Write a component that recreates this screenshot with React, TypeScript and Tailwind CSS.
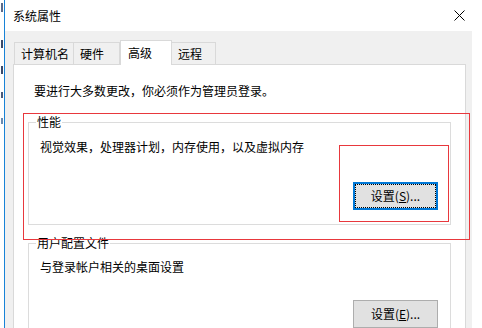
import React from 'react';

const font = "font-['Noto_Sans_CJK_SC','Microsoft_YaHei',sans-serif]";

const Tab: React.FC<{ label: string; w: string; active?: boolean; first?: boolean }> = ({ label, w, active, first }) =>
  active ? (
    <div className={`relative z-10 -mb-px flex h-[25px] items-start border border-b-0 border-[#d9d9d9] bg-white pl-[7px] pt-[3px] ${w}`}>
      {label}
    </div>
  ) : (
    <div
      className={`flex h-[22px] items-center border-t border-r border-[#d9d9d9] bg-[#f0f0f0] pl-[6px] pt-px ${first ? 'ml-px border-l' : ''} ${w}`}
    >
      {label}
    </div>
  );

const Button: React.FC<{ children: React.ReactNode; focused?: boolean }> = ({ children, focused }) => (
  <div
    className={`flex h-[28px] w-[85px] items-center justify-center bg-[#e1e1e1] ${
      focused
        ? 'border-2 border-[#0078d7] outline outline-1 outline-dotted outline-black outline-offset-[-3px]'
        : 'border border-[#adadad]'
    }`}
  >
    {children}
  </div>
);

const GroupBox: React.FC<{ title: string; text: string; className: string; button: React.ReactNode; pt: string }> = ({
  title, text, className, button, pt,
}) => (
  <div className={`relative flex flex-col border border-[#dcdcdc] pl-[11px] pr-[12px] ${pt} ${className}`}>
    <span className="absolute left-[7px] top-[-9px] bg-white px-px leading-4">{title}</span>
    <div className="leading-4">{text}</div>
    {button}
  </div>
);

export default function App() {
  return (
    <div className={`relative flex h-[328px] w-[482px] overflow-hidden bg-white text-[12px] text-black ${font}`}>
      {/* clipped bits of the window behind */}
      <div className="flex w-[4px] flex-col pl-px">
        <div className="mt-[3px] h-[9px] w-[2px] bg-[#5a6a8a]" />
        <div className="mt-[28px] h-[8px] w-[2px] bg-[#3a4a6a]" />
        <div className="mt-[18px] h-[8px] w-[2px] bg-[#3a4a6a]" />
        <div className="mt-[18px] h-[6px] w-[2px] bg-[#4a5a7a]" />
        <div className="mt-[20px] h-[6px] w-[2px] bg-[#6a8ab0]" />
      </div>
      <div className="w-px bg-[#1883d7]" />

      <div className="flex flex-1 flex-col">
        {/* title bar */}
        <div className="flex h-[31px] shrink-0 items-center pl-[8px] pr-[17px]">
          <span className="leading-4">系统属性</span>
          <svg className="ml-auto" width="11" height="11" viewBox="0 0 11 11">
            <path d="M0.5 0.5 L10.5 10.5 M10.5 0.5 L0.5 10.5" stroke="#000" strokeWidth="1" fill="none" />
          </svg>
        </div>

        <div className="flex flex-1">
          <div className="flex w-[467px] flex-col bg-[#f0f0f0] pl-[8px] pr-[6px] pt-[9px]">
            {/* tabs */}
            <div className="flex h-[24px] items-end">
              <Tab label="计算机名" w="w-[60px]" first />
              <Tab label="硬件" w="w-[46px]" />
              <Tab label="高级" w="w-[52px]" active />
              <Tab label="远程" w="w-[44px]" />
            </div>

            {/* tab panel */}
            <div className="flex h-[300px] flex-col border border-[#d9d9d9] bg-white px-[14px] pt-[18px]">
              <div className="ml-[6px] leading-4">要进行大多数更改，你必须作为管理员登录。</div>

              <GroupBox
                title="性能"
                text="视觉效果，处理器计划，内存使用，以及虚拟内存"
                className="mt-[23px] h-[103px]"
                pt="pt-[16px]"
                button={
                  <div className="mt-auto mb-[14px] self-end">
                    <Button focused>
                      设置(<u>S</u>)...
                    </Button>
                  </div>
                }
              />

              <GroupBox
                title="用户配置文件"
                text="与登录帐户相关的桌面设置"
                className="mt-[18px] h-[103px]"
                pt="pt-[15px]"
                button={
                  <div className="mt-[25px] self-end">
                    <Button>
                      设置(<u>E</u>)...
                    </Button>
                  </div>
                }
              />
            </div>
          </div>
          <div className="flex-1 bg-white" />
        </div>
      </div>

      {/* red annotation boxes */}
      <div className="absolute left-[23px] top-[113px] h-[127px] w-[447px] border border-[#e8383d]" />
      <div className="absolute left-[339px] top-[145px] h-[77px] w-[110px] border border-[#e8383d]" />
    </div>
  );
}
